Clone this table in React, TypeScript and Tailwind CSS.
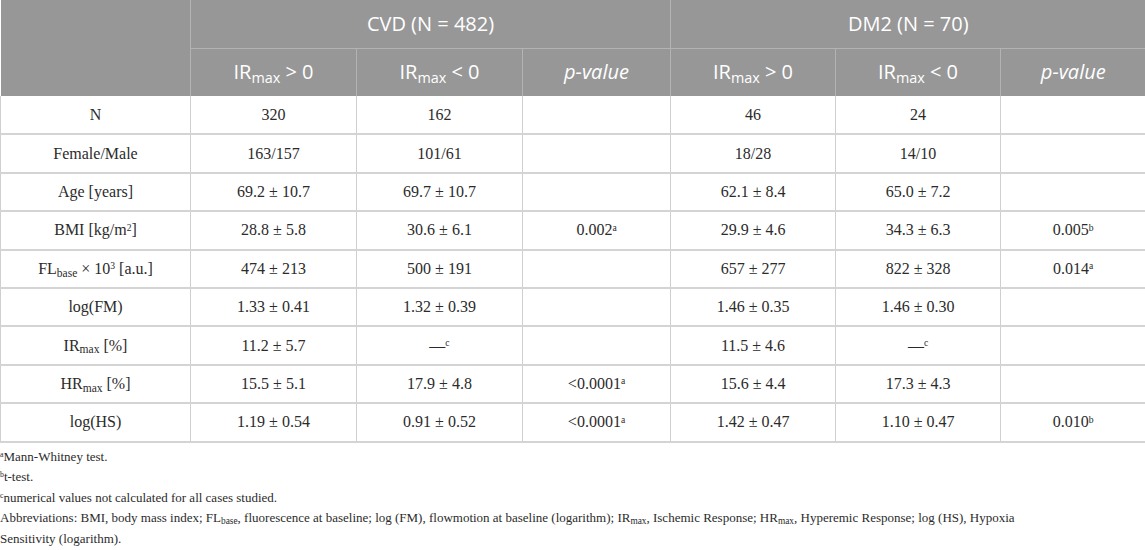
import React from 'react';

type Cell = React.ReactNode;

const Sub = ({ children }: { children: React.ReactNode }) => (
  <sub className="text-[0.72em]">{children}</sub>
);

const Sup = ({ children }: { children: React.ReactNode }) => (
  <sup className="text-[0.6em]">{children}</sup>
);

const IR = ({ sign }: { sign: string }) => (
  <span>
    IR<Sub>max</Sub> {sign} 0
  </span>
);

const rows: Cell[][] = [
  ['N', '320', '162', '', '46', '24', ''],
  ['Female/Male', '163/157', '101/61', '', '18/28', '14/10', ''],
  ['Age [years]', '69.2 ± 10.7', '69.7 ± 10.7', '', '62.1 ± 8.4', '65.0 ± 7.2', ''],
  [
    <>
      BMI [kg/m<Sup>2</Sup>]
    </>,
    '28.8 ± 5.8',
    '30.6 ± 6.1',
    <>
      0.002<Sup>a</Sup>
    </>,
    '29.9 ± 4.6',
    '34.3 ± 6.3',
    <>
      0.005<Sup>b</Sup>
    </>,
  ],
  [
    <>
      FL<Sub>base</Sub> × 10<Sup>3</Sup> [a.u.]
    </>,
    '474 ± 213',
    '500 ± 191',
    '',
    '657 ± 277',
    '822 ± 328',
    <>
      0.014<Sup>a</Sup>
    </>,
  ],
  ['log(FM)', '1.33 ± 0.41', '1.32 ± 0.39', '', '1.46 ± 0.35', '1.46 ± 0.30', ''],
  [
    <>
      IR<Sub>max</Sub> [%]
    </>,
    '11.2 ± 5.7',
    <>
      —<Sup>c</Sup>
    </>,
    '',
    '11.5 ± 4.6',
    <>
      —<Sup>c</Sup>
    </>,
    '',
  ],
  [
    <>
      HR<Sub>max</Sub> [%]
    </>,
    '15.5 ± 5.1',
    '17.9 ± 4.8',
    <>
      &lt;0.0001<Sup>a</Sup>
    </>,
    '15.6 ± 4.4',
    '17.3 ± 4.3',
    '',
  ],
  [
    'log(HS)',
    '1.19 ± 0.54',
    '0.91 ± 0.52',
    <>
      &lt;0.0001<Sup>a</Sup>
    </>,
    '1.42 ± 0.47',
    '1.10 ± 0.47',
    <>
      0.010<Sup>b</Sup>
    </>,
  ],
];

export default function App() {
  return (
    <div className="w-[1145px] h-[550px] overflow-hidden bg-white">
      <table className="w-[1145px] table-fixed border-collapse">
        <colgroup>
          <col className="w-[190px]" />
          <col className="w-[166px]" />
          <col className="w-[166px]" />
          <col className="w-[148px]" />
          <col className="w-[165px]" />
          <col className="w-[165px]" />
          <col className="w-[145px]" />
        </colgroup>
        <thead className="bg-[#979797] text-white font-['Open_Sans',sans-serif] text-[20px]">
          <tr className="h-[48px]">
            <th rowSpan={2} className="border-r border-[#b3b3b3]" />
            <th colSpan={3} className="border-r border-b border-[#b3b3b3] font-normal">
              CVD (N = 482)
            </th>
            <th colSpan={3} className="border-b border-[#b3b3b3] font-normal">
              DM2 (N = 70)
            </th>
          </tr>
          <tr className="h-[48px]">
            <th className="border-r border-[#b3b3b3] font-normal">
              <IR sign=">" />
            </th>
            <th className="border-r border-[#b3b3b3] font-normal">
              <IR sign="<" />
            </th>
            <th className="border-r border-[#b3b3b3] font-normal italic">p-value</th>
            <th className="border-r border-[#b3b3b3] font-normal">
              <IR sign=">" />
            </th>
            <th className="border-r border-[#b3b3b3] font-normal">
              <IR sign="<" />
            </th>
            <th className="font-normal italic">p-value</th>
          </tr>
        </thead>
        <tbody className="font-['Liberation_Serif',serif] text-[16px] text-[#2b2b2b]">
          {rows.map((row, i) => (
            <tr key={i} className="h-[38.4px]">
              {row.map((cell, j) => (
                <td
                  key={j}
                  className="border-x border-b-2 border-x-[#cfcfcf] border-b-[#d4d4d4] text-center leading-none"
                >
                  {cell}
                </td>
              ))}
            </tr>
          ))}
        </tbody>
      </table>
      <div className="pt-[4px] font-['Liberation_Serif',serif] text-[13px] leading-[20.5px] text-[#2b2b2b]">
        <p>
          <Sup>a</Sup>Mann-Whitney test.
        </p>
        <p>
          <Sup>b</Sup>t-test.
        </p>
        <p>
          <Sup>c</Sup>numerical values not calculated for all cases studied.
        </p>
        <p>
          Abbreviations: BMI, body mass index; FL<Sub>base</Sub>, fluorescence at baseline; log (FM),
          flowmotion at baseline (logarithm); IR<Sub>max</Sub>, Ischemic Response; HR<Sub>max</Sub>,
          Hyperemic Response; log (HS), Hypoxia
          <br />
          Sensitivity (logarithm).
        </p>
      </div>
    </div>
  );
}
